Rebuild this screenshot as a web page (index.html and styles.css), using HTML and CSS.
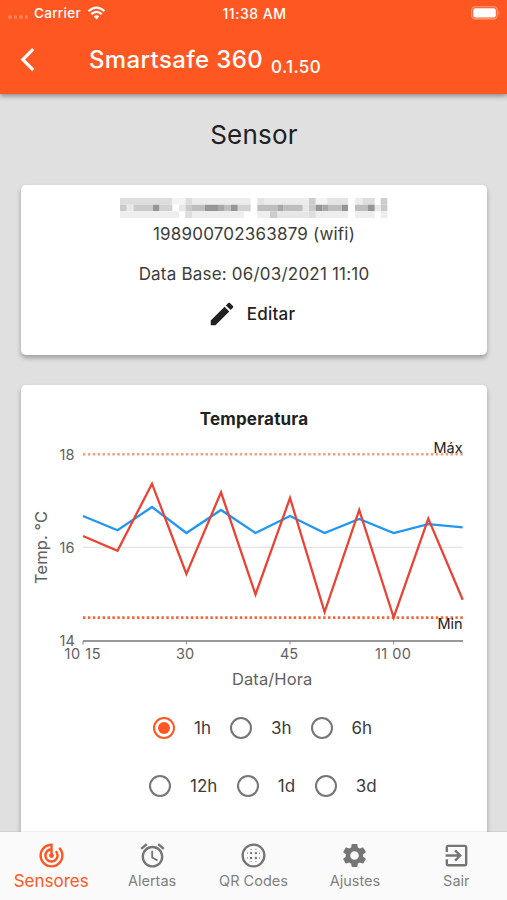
FILE: index.html
```html
<!DOCTYPE html>
<html lang="pt">
<head>
<meta charset="utf-8">
<title>Smartsafe 360</title>
<link rel="stylesheet" href="styles.css">
</head>
<body>
<div class="app">
  <header class="header">
    <div class="status">
      <div class="carrier">
        <span class="signal"><i></i><i></i><i></i><i></i></span>
        <span class="carrier-name">Carrier</span>
        <svg class="wifi" viewBox="0 0 18 14" width="19" height="14"><g fill="none" stroke="#fff" stroke-width="2.3"><path d="M1 5.2Q9-2 17 5.2"/><path d="M3.8 8.2Q9 3.5 14.2 8.2"/></g><path d="M6.2 10.5Q9 8.2 11.8 10.5L9 13.6Z" fill="#fff"/></svg>
      </div>
      <span class="clock">11:38 AM</span>
      <svg class="battery" viewBox="0 0 30 14" width="30" height="14"><rect x=".7" y=".7" width="25.6" height="12.2" rx="3.6" fill="none" stroke="#fff" stroke-opacity=".45" stroke-width="1.1"/><rect x="2.2" y="2.2" width="22.6" height="9.2" rx="2.2" fill="#fff"/><path d="M27.8 4.6q1.6 2.2 0 4.4z" fill="#fff" fill-opacity=".5"/></svg>
    </div>
    <div class="toolbar">
      <svg class="back" viewBox="0 0 16 26" width="16" height="26"><path d="M13.2 2.2L2.8 12.6L13.2 23" fill="none" stroke="#fff" stroke-width="3.2"/></svg>
      <h1 class="title">Smartsafe 360</h1>
      <span class="version">0.1.50</span>
    </div>
  </header>

  <main class="content">
    <h2 class="heading">Sensor</h2>
    <section class="card info">
      <svg class="redacted" viewBox="0 0 840 90" width="280" height="30">
        <g stroke-width="20" fill="none">
          <path stroke="#ddd" d="M18 28H175M214 28h20M745 28h37"/>
          <path stroke="#f4f4f4" d="M175 28h39M605 28h35"/>
          <path stroke="#ececec" d="M234 28H410M450 28H585M723 28h22"/>
          <path stroke="#e4e4e4" d="M430 28h20M640 28h62"/>
          <path stroke="#cdcdcd" d="M585 28h20M800 28h20"/>
          <path stroke="#cacaca" d="M18 48h20M58 48h59M214 48h20M585 48h20M800 48h20"/>
          <path stroke="#e8e8e8" d="M38 48h20M195 48h19M566 48h19M782 48h18"/>
          <path stroke="#d2d2d2" d="M136 48h39M371 48h39"/>
          <path stroke="#bebebe" d="M234 48h39M332 48h19M430 48h60M508 48h58M644 48h39M723 48h39"/>
          <path stroke="#a8a8a8" d="M312 48h20M490 48h18M625 48h19"/>
          <path stroke="#969696" d="M117 48h19M273 48h39M351 48h20M605 48h20M683 48h19M762 48h20"/>
          <path stroke="#eee" d="M18 68H195M234 68H390M430 68h38M605 68h97M723 68h59M800 68h20"/>
          <path stroke="#ddd" d="M214 68h20M585 68h20"/>
          <path stroke="#e6e6e6" d="M490 68h95"/>
          <path stroke="#ccc" d="M468 68h22"/>
        </g>
      </svg>
      <p class="serial">198900702363879 (wifi)</p>
      <p class="date">Data Base: 06/03/2021 11:10</p>
      <div class="edit">
        <svg viewBox="0 0 24 24" width="30" height="30"><path fill="#212121" d="M3 17.25V21h3.75L17.81 9.94l-3.75-3.75L3 17.25zM20.71 7.04c.39-.39.39-1.02 0-1.41l-2.34-2.34c-.39-.39-1.02-.39-1.41 0l-1.83 1.83 3.75 3.75 1.83-1.83z"/></svg>
        <span class="edit-label">Editar</span>
      </div>
    </section>

    <section class="card chart-card">
      <h3 class="chart-title">Temperatura</h3>
      <svg class="chart" viewBox="21 435 466 260" width="466" height="260">
        <path d="M83 547.3H463" stroke="#e3e3e3" stroke-width="1.3"/>
        <path d="M83 454.2H463" stroke="#f0a080" stroke-width="2.4" stroke-dasharray="2.45 2.45"/>
        <path d="M83 617.6H463" stroke="#fa6535" stroke-width="2.6" stroke-dasharray="2.45 2.45"/>
        <path d="M83 641H463" stroke="#757575" stroke-width="1.4"/>
        <path d="M83 641v3.5M186.4 641v3.5M290 641v3.5M393.7 641v3.5" stroke="#888" stroke-width="1"/>
        <polyline class="line blue" points="83,516 117.5,530.3 152,507 186.4,533 221,510 255.5,533 290,516 324.6,533 359.2,519 393.7,533 428.3,524.2 462.7,527.3"/>
        <polyline class="line red" points="83,536 117.5,550.8 152,483.7 186.4,574 221,492.3 255.5,594.5 290,498 324.6,612 359.2,510 393.7,617.5 428.3,518.6 462.7,599.7"/>
        <g class="tick">
          <text x="59.5" y="459.5">18</text><text x="59.5" y="552.7">16</text><text x="59.5" y="645.5">14</text>
          <text x="64.5" y="658.5" textLength="36">10 15</text><text x="176" y="658.5">30</text><text x="280" y="658.5">45</text><text x="375" y="658.5" textLength="36">11 00</text>
        </g>
        <text class="limit" x="433.5" y="453.3">Máx</text>
        <text class="limit" x="437.5" y="629">Min</text>
        <text class="axis" x="232" y="685">Data/Hora</text>
        <text class="axis" transform="translate(46.5 584) rotate(-90)">Temp. °C</text>
      </svg>
      <div class="ranges">
        <div class="range-row first">
          <label class="range on"><span class="radio"></span>1h</label>
          <label class="range"><span class="radio"></span>3h</label>
          <label class="range"><span class="radio"></span>6h</label>
        </div>
        <div class="range-row second">
          <label class="range"><span class="radio"></span>12h</label>
          <label class="range"><span class="radio"></span>1d</label>
          <label class="range"><span class="radio"></span>3d</label>
        </div>
      </div>
    </section>
  </main>

  <nav class="tabs">
    <a class="tab active"><svg viewBox="0 0 24 24"><path d="M19.07 4.93l-1.41 1.41C19.1 7.79 20 9.79 20 12c0 4.42-3.58 8-8 8s-8-3.58-8-8c0-4.08 3.05-7.44 7-7.93v2.02C8.16 6.57 6 9.03 6 12c0 3.31 2.69 6 6 6s6-2.69 6-6c0-1.66-.67-3.16-1.76-4.24l-1.41 1.41C15.55 9.9 16 10.9 16 12c0 2.21-1.79 4-4 4s-4-1.79-4-4c0-1.86 1.28-3.41 3-3.86v2.14c-.6.35-1 .98-1 1.72 0 1.1.9 2 2 2s2-.9 2-2c0-.74-.4-1.38-1-1.72V2h-1C6.48 2 2 6.48 2 12s4.48 10 10 10 10-4.48 10-10c0-2.76-1.12-5.26-2.93-7.07z"/></svg><span>Sensores</span></a>
    <a class="tab"><svg viewBox="0 0 24 24"><path d="M22 5.72l-4.6-3.86-1.29 1.53 4.6 3.86L22 5.72zM7.88 3.39L6.6 1.86 2 5.71l1.29 1.53 4.59-3.85zM12.5 8H11v6l4.75 2.85.75-1.23-4-2.37V8zM12 4c-4.97 0-9 4.03-9 9s4.02 9 9 9c4.97 0 9-4.03 9-9s-4.03-9-9-9zm0 16c-3.87 0-7-3.13-7-7s3.13-7 7-7 7 3.13 7 7-3.13 7-7 7z"/></svg><span>Alertas</span></a>
    <a class="tab"><svg viewBox="0 0 24 24"><circle cx="12" cy="12" r="9" fill="none" stroke="#757575" stroke-width="1.9"/><g><circle cx="10" cy="10" r="1"/><circle cx="14" cy="10" r="1"/><circle cx="10" cy="14" r="1"/><circle cx="14" cy="14" r="1"/><circle cx="7" cy="10" r=".5"/><circle cx="7" cy="14" r=".5"/><circle cx="17" cy="10" r=".5"/><circle cx="17" cy="14" r=".5"/><circle cx="10" cy="7" r=".5"/><circle cx="14" cy="7" r=".5"/><circle cx="10" cy="17" r=".5"/><circle cx="14" cy="17" r=".5"/></g></svg><span>QR Codes</span></a>
    <a class="tab"><svg viewBox="0 0 24 24"><path d="M19.14 12.94c.04-.3.06-.61.06-.94 0-.32-.02-.64-.07-.94l2.03-1.58c.18-.14.23-.41.12-.61l-1.92-3.32c-.12-.22-.37-.29-.59-.22l-2.39.96c-.5-.38-1.03-.7-1.62-.94l-.36-2.54c-.04-.24-.24-.41-.48-.41h-3.84c-.24 0-.43.17-.47.41l-.36 2.54c-.59.24-1.13.57-1.62.94l-2.39-.96c-.22-.08-.47 0-.59.22L2.74 8.87c-.12.21-.08.47.12.61l2.03 1.58c-.05.3-.09.63-.09.94s.02.64.07.94l-2.03 1.58c-.18.14-.23.41-.12.61l1.92 3.32c.12.22.37.29.59.22l2.39-.96c.5.38 1.03.7 1.62.94l.36 2.54c.05.24.24.41.48.41h3.84c.24 0 .44-.17.47-.41l.36-2.54c.59-.24 1.13-.56 1.62-.94l2.39.96c.22.08.47 0 .59-.22l1.92-3.32c.12-.22.07-.47-.12-.61l-2.01-1.58zM12 15.6c-1.98 0-3.6-1.62-3.6-3.6s1.62-3.6 3.6-3.6 3.6 1.62 3.6 3.6-1.62 3.6-3.6 3.6z"/></svg><span>Ajustes</span></a>
    <a class="tab"><svg viewBox="0 0 24 24"><path d="M10.09 15.59L11.5 17l5-5-5-5-1.41 1.41L12.67 11H3v2h9.67l-2.58 2.59zM19 3H5c-1.11 0-2 .9-2 2v4h2V5h14v14H5v-4H3v4c0 1.1.89 2 2 2h14c1.1 0 2-.9 2-2V5c0-1.1-.9-2-2-2z"/></svg><span>Sair</span></a>
  </nav>
</div>
</body>
</html>
```
FILE: styles.css
```css
* { box-sizing: border-box; }
body { margin: 0; font-family: Inter, "Liberation Sans", sans-serif; color: #3c3c3c; }
h1, h2, h3, p { margin: 0; font-weight: 400; }
svg { display: block; flex: none; }
.app { width: 507px; height: 900px; display: flex; flex-direction: column; background: #e0e0e0; overflow: hidden; }

.header { height: 94px; flex: none; background: #ff5722; color: #fff; box-shadow: 0 2px 5px rgba(0,0,0,.4); z-index: 1; }
.status { height: 26px; display: grid; grid-template-columns: 1fr auto 1fr; align-items: center; padding: 0 6px 0 8px; font-size: 13.5px; font-weight: 500; }
.carrier { display: flex; align-items: center; }
.carrier-name { letter-spacing: .3px; }
.clock { font-size: 14px; letter-spacing: .5px; }
.signal { display: flex; gap: 2px; width: 26px; padding-top: 8px; }
.signal i { width: 3.6px; height: 3.6px; border-radius: 2px; background: rgba(255,255,255,.25); }
.wifi { margin-left: 6px; }
.battery { justify-self: end; }
.toolbar { height: 68px; display: flex; align-items: center; padding-left: 20px; }
.title { margin-left: 53px; font-size: 24px; line-height: 30px; font-weight: 500; letter-spacing: .37px; }
.version { margin: 14px 0 0 8px; font-size: 17px; line-height: 20px; font-weight: 500; letter-spacing: .4px; }

.content { flex: 1; min-height: 0; padding: 0 20px 0 21px; overflow: hidden; }
.heading { height: 91px; padding-top: 24px; text-align: center; font-size: 26px; line-height: 34px; letter-spacing: .2px; color: #212121; }
.card { background: #fff; border-radius: 5px; box-shadow: 0 3px 5px rgba(0,0,0,.3); display: flex; flex-direction: column; align-items: center; }
.info { height: 170px; padding-top: 7px; margin-bottom: 30px; font-size: 17px; line-height: 24px; letter-spacing: .2px; }
.date { margin-top: 16px; }
.edit { display: flex; align-items: center; gap: 10px; margin: 13px 6px 0 0; color: #212121; font-weight: 500; }
.chart-card { height: 500px; }
.chart-title { height: 50px; padding-top: 22px; font-size: 17px; line-height: 24px; font-weight: 700; letter-spacing: .2px; color: #212121; }
.line { fill: none; stroke-width: 2.3; }
.blue { stroke: #2196f3; }
.red { stroke: #ea4335; }
.tick { font-size: 14.5px; fill: #616161; }
.limit { font-size: 14.5px; fill: #212121; }
.axis { font-size: 16.5px; fill: #616161; letter-spacing: .1px; }
.ranges { align-self: stretch; }
.range-row { display: flex; align-items: center; height: 58px; font-size: 17px; }
.first { margin-top: 4px; padding-left: 131px; gap: 18px; }
.second { padding-left: 127px; gap: 18.5px; }
.range { display: flex; align-items: center; gap: 18px; }
.radio { width: 22px; height: 22px; margin: 1px; border: 2.5px solid #757575; border-radius: 50%; display: grid; place-items: center; }
.on .radio { border-color: #ff5722; }
.on .radio::after { content: ""; width: 12px; height: 12px; border-radius: 50%; background: #ff5722; }

.tabs { height: 68px; flex: none; display: grid; grid-template-columns: repeat(5, 1fr); background: #fafafa; z-index: 1; box-shadow: 0 -1px 1px rgba(0,0,0,.06); }
.tab { display: flex; flex-direction: column; align-items: center; padding-top: 9px; color: #808080; fill: #757575; font-size: 14.5px; line-height: 20px; }
.tab svg { width: 29px; height: 29px; }
.tab span { margin-top: 1px; }
.active { color: #ff5722; fill: #ff5722; font-size: 17px; padding-left: 1px; }
```
